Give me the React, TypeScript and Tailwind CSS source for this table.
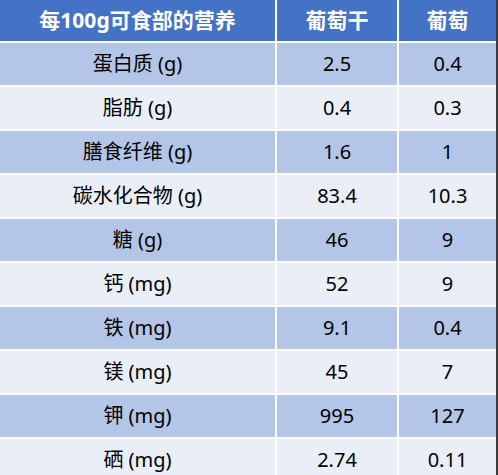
import React from "react"

type Row = { name: string; dried: string; fresh: string }

const rows: Row[] = [
    { name: "蛋白质 (g)", dried: "2.5", fresh: "0.4" },
    { name: "脂肪 (g)", dried: "0.4", fresh: "0.3" },
    { name: "膳食纤维 (g)", dried: "1.6", fresh: "1" },
    { name: "碳水化合物 (g)", dried: "83.4", fresh: "10.3" },
    { name: "糖 (g)", dried: "46", fresh: "9" },
    { name: "钙 (mg)", dried: "52", fresh: "9" },
    { name: "铁 (mg)", dried: "9.1", fresh: "0.4" },
    { name: "镁 (mg)", dried: "45", fresh: "7" },
    { name: "钾 (mg)", dried: "995", fresh: "127" },
    { name: "硒 (mg)", dried: "2.74", fresh: "0.11" },
]

export default function App() {
    return (
        <div
            className="flex h-[475px] w-[498px] overflow-hidden bg-white"
            style={{ fontFamily: '"Noto Sans", "Noto Sans CJK SC", sans-serif' }}
        >
            <div className="grid w-[496px] grid-cols-[275px_120px_97px] auto-rows-[42px] grid-rows-[41px] gap-[2px] content-start">
                <div className="flex items-center justify-center bg-[#4472C4] text-[21px] font-bold text-white">
                    每100g可食部的营养
                </div>
                <div className="flex items-center justify-center bg-[#4472C4] text-[21px] font-bold text-white">
                    葡萄干
                </div>
                <div className="flex items-center justify-center bg-[#4472C4] text-[21px] font-bold text-white">
                    葡萄
                </div>
                {rows.map((row, i) => {
                    const bg = i % 2 === 0 ? "bg-[#B4C6E7]" : "bg-[#E9EEF7]"
                    return (
                        <React.Fragment key={row.name}>
                            <div className={`flex items-center justify-center text-[20px] text-black ${bg}`}>
                                {row.name}
                            </div>
                            <div className={`flex items-center justify-center text-[20px] text-black ${bg}`}>
                                {row.dried}
                            </div>
                            <div className={`flex items-center justify-center text-[20px] text-black ${bg}`}>
                                {row.fresh}
                            </div>
                        </React.Fragment>
                    )
                })}
            </div>
            <div className="w-[2px] shrink-0 bg-[#3c3c3c]" />
        </div>
    )
}
